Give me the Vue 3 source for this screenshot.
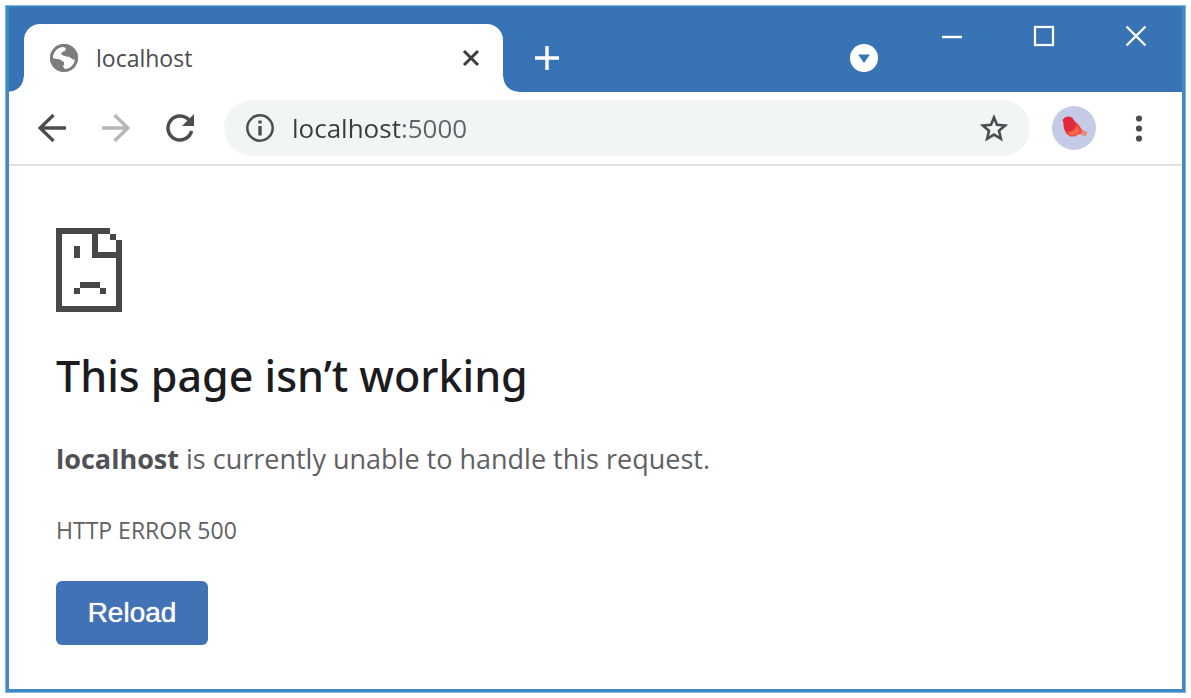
<script setup>
import { ref } from 'vue'

const address = ref('localhost:5000')
</script>

<template>
  <div class="window">
    <header class="titlebar">
      <div class="tab">
        <svg class="icon" viewBox="0 0 28 28" aria-hidden="true">
          <circle cx="14" cy="14" r="14" fill="#7b7d7f" />
          <path d="M13 3C7 3 3 8 3 14l3 1 5 1 2 2-1 3 3 4c6 0 10-5 10-11l-2-1-3 1-2-3-4 1-3-2 1-2 3-1 1-3z" fill="#fff" />
          <path d="M17 3l2 3-3 2-2 3 3 2 3-1 2 3 3 1c0-6-3-11-8-13z" fill="#7b7d7f" />
          <path d="M3 15h6l2 2 3 1v3l-2 2-1 2C6 24 3 20 3 15z" fill="#7b7d7f" />
          <circle cx="14" cy="14" r="12.6" fill="none" stroke="#7b7d7f" stroke-width="2.6" />
        </svg>
        <span class="tab-title">localhost</span>
        <button class="tab-close" aria-label="Close tab">
          <svg viewBox="0 0 18 18" width="18" height="18"><path d="M2 2l14 14M16 2L2 16" stroke="#3c3d3f" stroke-width="3" /></svg>
        </button>
      </div>
      <button class="new-tab" aria-label="New tab">
        <svg viewBox="0 0 24 24" width="24" height="24"><path d="M12 0v24M0 12h24" stroke="#fff" stroke-width="3.4" /></svg>
      </button>
      <button class="tab-search" aria-label="Search tabs">
        <svg viewBox="0 0 28 28" width="28" height="28">
          <circle cx="14" cy="14" r="14" fill="#fff" />
          <path d="M8 10.5h12L14 19z" fill="#3a73b5" />
        </svg>
      </button>
      <div class="window-controls">
        <button aria-label="Minimize">
          <svg viewBox="0 0 22 22" width="22" height="22"><path d="M1 12h20" stroke="#fff" stroke-width="2.4" /></svg>
        </button>
        <button aria-label="Maximize">
          <svg viewBox="0 0 22 22" width="22" height="22"><rect x="2" y="2" width="18" height="18" fill="none" stroke="#fff" stroke-width="2.2" /></svg>
        </button>
        <button aria-label="Close">
          <svg viewBox="0 0 22 22" width="22" height="22"><path d="M1.500 1.500l19 19M20.500 1.500l-19 19" stroke="#fff" stroke-width="2.4" /></svg>
        </button>
      </div>
    </header>

    <nav class="toolbar">
      <div class="history">
        <button aria-label="Back">
          <svg class="icon" viewBox="0 0 28 28"><path d="M28 14H2M15.500 1L2.200 14l13.300 13" fill="none" stroke="#4c4d50" stroke-width="3.3" /></svg>
        </button>
        <button aria-label="Forward">
          <svg class="icon" viewBox="0 0 28 28"><path d="M0 14h26M12.500 1l13.300 13L12.500 27" fill="none" stroke="#b4b6b8" stroke-width="3.3" /></svg>
        </button>
        <button aria-label="Reload this page">
          <svg class="icon" viewBox="0 0 28 28">
            <path d="M25.600 17A12 12 0 1 1 23.500 6.700" fill="none" stroke="#4c4d50" stroke-width="3.5" />
            <path d="M28 0v12H16z" fill="#4c4d50" />
          </svg>
        </button>
      </div>
      <div class="omnibox">
        <svg class="icon" viewBox="0 0 28 28" aria-hidden="true">
          <circle cx="14" cy="14" r="12.700" fill="none" stroke="#4c4d50" stroke-width="2.500" />
          <path d="M14 6.500v3M14 12v9.500" stroke="#4c4d50" stroke-width="3.4" />
        </svg>
        <input v-model="address" class="address" type="text" aria-label="Address" spellcheck="false" />
        <button aria-label="Bookmark this page">
          <svg class="icon" viewBox="0 0 28 28"><path d="M14 3.500l3 7.300 8.200.7-6.200 5.300 1.900 8L14 20.600l-6.900 4.200 1.900-8-6.200-5.300 8.200-.7z" fill="none" stroke="#4c4d50" stroke-width="2.600" /></svg>
        </button>
      </div>
      <button aria-label="Profile">
        <svg viewBox="0 0 44 44" width="44" height="44">
          <circle cx="22" cy="22" r="22" fill="#c5cae6" />
          <path d="M10.500 14l2.500-2.500 3-1 4 1 2 3 5 4.500 3 5 5 2.500v2l-3 1.500-3-2-3 .5-3 2h-5l-4-3-2-5-.5-6z" fill="#ee4c42" />
          <path d="M10.500 14l2.500-2.500 3-1 4 1 2 3 2.500 4-2.500 4-4 3h-4l-2-3-.5-6z" fill="#e02a40" />
          <path d="M17 26.500l5-1.500 3-3 3 3-4 3.500-5 .5z" fill="#ff6a4c" />
          <path d="M30 24.500l5 2.500v2l-3 1-3-2z" fill="#ea9476" />
        </svg>
      </button>
      <button class="menu" aria-label="Menu">
        <svg class="icon" viewBox="0 0 28 28" fill="#4c4d50"><circle cx="14" cy="4.500" r="3.100" /><circle cx="14" cy="14.500" r="3.100" /><circle cx="14" cy="24.500" r="3.100" /></svg>
      </button>
    </nav>

    <main class="page">
      <svg class="sad-page" viewBox="0 0 11 14" width="66" height="84" shape-rendering="crispEdges" fill="#47484a" aria-hidden="true">
        <path d="M0 0h9v1H7v3h3V2h1v12H0zM1 1v12h9V5H6V1z" fill-rule="evenodd" />
        <path d="M9 1h1v1H9zM3 3h1v2H3zM4 9h3.300v1H4zM3 10h1v1H3zM7.300 10h1v1h-1z" />
      </svg>
      <h1>This page isn’t working</h1>
      <p class="summary"><strong>localhost</strong> is currently unable to handle this request.</p>
      <p class="code">HTTP ERROR 500</p>
      <button class="reload">Reload</button>
    </main>
  </div>
</template>

<style>
body {
  margin: 0;
  background: #fff;
}
</style>

<style scoped>
.window {
  box-sizing: border-box;
  min-height: calc(100vh - 10px);
  margin: 5px;
  padding: 1px 3px 3px;
  border: 1px solid #7db4de;
  background: #4189c3;
  display: flex;
  flex-direction: column;
  font-family: "Open Sans", "Noto Sans", sans-serif;
}

button {
  display: flex;
  align-items: center;
  justify-content: center;
  flex: none;
  padding: 0;
  border: 0;
  background: none;
}

svg {
  display: block;
  flex: none;
}

.icon {
  width: 28px;
  height: 28px;
}

.titlebar {
  display: flex;
  align-items: flex-end;
  height: 85px;
  padding-left: 15px;
  background: #3873b6;
}

.tab {
  position: relative;
  box-sizing: border-box;
  display: flex;
  align-items: center;
  flex: 0 1 479px;
  height: 68px;
  padding: 0 23px 0 26px;
  border-radius: 16px 16px 0 0;
  background: #fff;
}

.tab::before,
.tab::after {
  content: "";
  position: absolute;
  bottom: 0;
  width: 15px;
  height: 15px;
}

.tab::before {
  right: 100%;
  background: radial-gradient(circle at 0 0, transparent 14px, #fff 15px);
}

.tab::after {
  left: 100%;
  background: radial-gradient(circle at 100% 0, transparent 14px, #fff 15px);
}

.tab-title {
  flex: 1;
  margin-left: 18px;
  color: #4b4c50;
  font-size: 23px;
  line-height: 32px;
}

.new-tab,
.tab-search {
  height: 68px;
}

.new-tab {
  margin-left: 32px;
}

.tab-search {
  margin: 0 28px 0 auto;
}

.window-controls {
  display: flex;
  align-self: flex-start;
}

.window-controls button {
  width: 92px;
  height: 58px;
}

.toolbar {
  display: flex;
  align-items: center;
  gap: 22px;
  padding: 8px 22px 8px 21px;
  border-bottom: 2px solid #dfe2e3;
  background: #fff;
}

.history {
  display: flex;
  gap: 20px;
}

.history button {
  width: 44px;
  height: 44px;
}

.omnibox {
  box-sizing: border-box;
  display: flex;
  align-items: center;
  gap: 18px;
  flex: 1;
  min-width: 0;
  height: 56px;
  padding: 0 22px;
  border-radius: 28px;
  background: #f1f5f5;
}

.address {
  flex: 1;
  min-width: 0;
  padding: 0;
  border: 0;
  outline: 0;
  background: linear-gradient(90deg, #3a3b3e 110px, #616266 110px);
  background-clip: text;
  color: transparent;
  caret-color: #3a3b3e;
  font-family: inherit;
  font-size: 26px;
  line-height: 36px;
}

.menu {
  width: 42px;
  height: 44px;
}

.page {
  flex: 1;
  padding: 62px 47px 44px;
  background: #fff;
  color: #5f6064;
}

h1 {
  margin: 34px 0 35px;
  color: #1c1c1f;
  font-family: "Noto Sans", "Open Sans", sans-serif;
  font-size: 43px;
  font-weight: 500;
  line-height: 60px;
}

p {
  margin: 0;
  line-height: 36px;
}

.summary {
  font-size: 27px;
}

.summary strong {
  color: #505155;
}

.code {
  margin: 35px 0 33px;
  font-size: 23px;
}

.reload {
  width: 152px;
  height: 64px;
  border-radius: 6px;
  background: #4272b6;
  color: #fff;
  font-family: "Liberation Sans", Arial, sans-serif;
  font-size: 28px;
  text-shadow: 0 0 1px #fff;
}
</style>
